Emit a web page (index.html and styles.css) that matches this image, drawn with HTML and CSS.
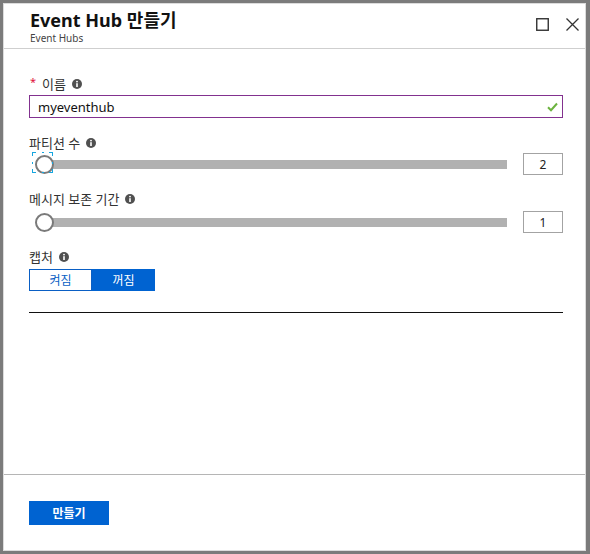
FILE: index.html
```html
<!DOCTYPE html>
<html lang="ko">
<head>
<meta charset="utf-8">
<title>Event Hub 만들기</title>
<link rel="stylesheet" href="styles.css">
</head>
<body>
<div class="panel">
  <header class="header">
    <div class="titles">
      <h1 class="title">Event Hub 만들기</h1>
      <div class="subtitle">Event Hubs</div>
    </div>
    <div class="win-icons">
      <svg class="win-icon" width="13" height="13" viewBox="0 0 13 13"><rect x="0.75" y="0.75" width="11.5" height="11.5" fill="none" stroke="#333" stroke-width="1.4"/></svg>
      <svg class="win-icon" width="13" height="13" viewBox="0 0 13 13"><path d="M0.5 0.5 L12.5 12.5 M12.5 0.5 L0.5 12.5" stroke="#333" stroke-width="1.3" fill="none"/></svg>
    </div>
  </header>

  <main class="content">
    <div class="field f-name">
      <div class="label"><span class="req">*</span>이름<svg class="info" width="10" height="10" viewBox="0 0 10 10"><circle cx="5" cy="5" r="5" fill="#505050"/><rect x="4.2" y="4.2" width="1.6" height="3.8" fill="#fff"/><circle cx="5" cy="2.6" r="0.95" fill="#fff"/></svg></div>
      <div class="input">
        <span class="input-text">myeventhub</span>
        <svg class="check" width="11" height="10" viewBox="0 0 11 10"><path d="M1 5.2 L4 8.2 L10 1.5" fill="none" stroke="#6cb33f" stroke-width="2"/></svg>
      </div>
    </div>

    <div class="field f-part">
      <div class="label">파티션 수<svg class="info" width="10" height="10" viewBox="0 0 10 10"><circle cx="5" cy="5" r="5" fill="#505050"/><rect x="4.2" y="4.2" width="1.6" height="3.8" fill="#fff"/><circle cx="5" cy="2.6" r="0.95" fill="#fff"/></svg></div>
      <div class="slider-row">
        <div class="slider">
          <div class="track"></div>
          <div class="thumb focused"></div>
        </div>
        <div class="numbox">2</div>
      </div>
    </div>

    <div class="field f-ret">
      <div class="label">메시지 보존 기간<svg class="info" width="10" height="10" viewBox="0 0 10 10"><circle cx="5" cy="5" r="5" fill="#505050"/><rect x="4.2" y="4.2" width="1.6" height="3.8" fill="#fff"/><circle cx="5" cy="2.6" r="0.95" fill="#fff"/></svg></div>
      <div class="slider-row">
        <div class="slider">
          <div class="track"></div>
          <div class="thumb"></div>
        </div>
        <div class="numbox">1</div>
      </div>
    </div>

    <div class="field f-cap">
      <div class="label">캡처<svg class="info" width="10" height="10" viewBox="0 0 10 10"><circle cx="5" cy="5" r="5" fill="#505050"/><rect x="4.2" y="4.2" width="1.6" height="3.8" fill="#fff"/><circle cx="5" cy="2.6" r="0.95" fill="#fff"/></svg></div>
      <div class="toggle">
        <span class="opt">켜짐</span>
        <span class="opt on">꺼짐</span>
      </div>
    </div>

    <div class="rule"></div>
  </main>

  <footer class="footer">
    <button class="create">만들기</button>
  </footer>
</div>
</body>
</html>
```

FILE: styles.css
```css
* { box-sizing: border-box; }
html, body { margin: 0; padding: 0; }
body {
  width: 590px;
  height: 554px;
  background: #7b7b7b;
  padding: 3px 4px 3px 3px;
  font-family: "Noto Sans", "Noto Sans CJK KR", sans-serif;
  color: #222;
}
.panel {
  width: 583px;
  height: 548px;
  background: #fff;
  border: 1px solid #dcdcdc;
  display: flex;
  flex-direction: column;
}
.header {
  display: flex;
  justify-content: space-between;
  align-items: flex-start;
  padding: 4px 6px 5px 26px;
  border-bottom: 1px solid #cfcfcf;
}
.title {
  margin: 0;
  font-size: 18px;
  line-height: 25px;
  font-weight: 700;
  color: #111;
}
.subtitle {
  font-size: 10px;
  line-height: 10px;
  color: #444;
}
.win-icons {
  display: flex;
  gap: 17px;
  margin-top: 10px;
}
.win-icon { display: block; }

.content {
  flex: 1;
  padding: 26px 22px 0 25px;
}
.label {
  font-size: 13px;
  line-height: 18px;
  color: #333;
  display: flex;
  align-items: center;
  margin-bottom: 2px;
}
.label .info { margin-left: 6px; }
.req {
  color: #e0103a;
  font-size: 11px;
  margin: 0 6px 0 1px;
  line-height: 12px;
  position: relative;
  top: -2px;
}
.f-part { margin-top: 16px; }
.f-part .label { margin-bottom: 1px; }
.f-ret { margin-top: 15px; }
.f-ret .label { margin-bottom: 3px; }
.f-cap { margin-top: 15px; }
.f-cap .label { margin-bottom: 3px; }

.input {
  height: 23px;
  border: 1px solid #82318f;
  display: flex;
  align-items: center;
  justify-content: space-between;
  padding: 0 4px 0 8px;
}
.input-text {
  font-size: 13px;
  color: #111;
}
.check { display: block; }

.slider-row {
  display: flex;
  align-items: center;
  gap: 16px;
}
.slider {
  flex: 1;
  position: relative;
  height: 22px;
  display: flex;
  align-items: center;
}
.track {
  margin-left: 15px;
  flex: 1;
  height: 9px;
  background: #b1b1b1;
}
.thumb {
  position: absolute;
  left: 6px;
  top: 2px;
  width: 19px;
  height: 19px;
  border-radius: 50%;
  border: 2px solid #7a7a7a;
  background: #fff;
}
.thumb.focused::before {
  content: "";
  position: absolute;
  left: -5px;
  top: -5px;
  width: 21px;
  height: 21px;
  background:
    linear-gradient(#15a6e0, #15a6e0) left top / 4px 1px,
    linear-gradient(#15a6e0, #15a6e0) left top / 1px 4px,
    linear-gradient(#15a6e0, #15a6e0) right top / 4px 1px,
    linear-gradient(#15a6e0, #15a6e0) right top / 1px 4px,
    linear-gradient(#15a6e0, #15a6e0) left bottom / 4px 1px,
    linear-gradient(#15a6e0, #15a6e0) left bottom / 1px 4px,
    linear-gradient(#15a6e0, #15a6e0) right bottom / 4px 1px,
    linear-gradient(#15a6e0, #15a6e0) right bottom / 1px 4px,
    linear-gradient(#15a6e0, #15a6e0) center top / 2px 1px,
    linear-gradient(#15a6e0, #15a6e0) center bottom / 2px 1px,
    linear-gradient(#15a6e0, #15a6e0) left center / 1px 2px,
    linear-gradient(#15a6e0, #15a6e0) right center / 1px 2px;
  background-repeat: no-repeat;
}
.numbox {
  width: 40px;
  height: 22px;
  border: 1px solid #a3a3a3;
  display: flex;
  align-items: center;
  justify-content: center;
  font-size: 12px;
  color: #222;
}

.toggle {
  display: flex;
  width: 126px;
  height: 22px;
}
.opt {
  flex: 1;
  display: flex;
  align-items: center;
  justify-content: center;
  font-size: 12px;
  border: 1px solid #0a5fc4;
  color: #0a5fc4;
  background: #fff;
}
.opt.on {
  background: #0063d1;
  border-color: #0063d1;
  color: #fff;
}

.rule {
  margin-top: 21px;
  height: 1px;
  background: #111;
}

.footer {
  height: 76px;
  border-top: 1px solid #b5b5b5;
  padding: 26px 0 0 25px;
}
.create {
  display: block;
  width: 80px;
  height: 24px;
  border: none;
  background: #0063d1;
  color: #fff;
  font-family: "Noto Sans", "Noto Sans CJK KR", sans-serif;
  font-weight: 700;
  font-size: 12px;
  padding: 0;
}
```
